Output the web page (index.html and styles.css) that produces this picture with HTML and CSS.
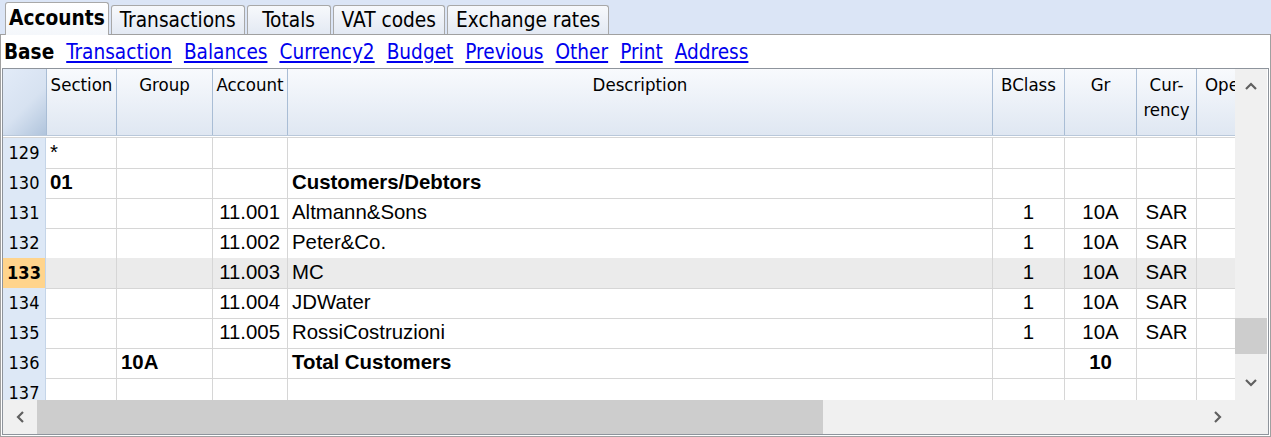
FILE: index.html
```html
<!DOCTYPE html>
<html>
<head>
<meta charset="utf-8">
<link rel="stylesheet" href="styles.css">
</head>
<body>
<div class="tabbar">
  <div class="tab active">Accounts</div>
  <div class="tab">Transactions</div>
  <div class="tab totals">Totals</div>
  <div class="tab">VAT codes</div>
  <div class="tab">Exchange rates</div>
</div>
<div class="panel">
  <div class="views">
    <span class="view-current">Base</span>
    <a class="view-link">Transaction</a>
    <a class="view-link">Balances</a>
    <a class="view-link">Currency2</a>
    <a class="view-link">Budget</a>
    <a class="view-link">Previous</a>
    <a class="view-link">Other</a>
    <a class="view-link">Print</a>
    <a class="view-link">Address</a>
  </div>
  <div class="frame">
    <div class="frame-main">
      <div class="viewport">
        <div class="row head">
          <div class="corner-cell"></div>
          <div class="hcell">Section</div>
          <div class="hcell">Group</div>
          <div class="hcell">Account</div>
          <div class="hcell">Description</div>
          <div class="hcell">BClass</div>
          <div class="hcell">Gr</div>
          <div class="hcell">Cur-<br>rency</div>
          <div class="hcell hcell-last">Opening</div>
        </div>
        <div class="body">
          <div class="row">
            <div class="num">129</div><div class="cell l">*</div><div class="cell"></div><div class="cell"></div><div class="cell l"></div><div class="cell"></div><div class="cell"></div><div class="cell"></div><div class="cell"></div>
          </div>
          <div class="row">
            <div class="num">130</div><div class="cell l b">01</div><div class="cell"></div><div class="cell"></div><div class="cell l b">Customers/Debtors</div><div class="cell"></div><div class="cell"></div><div class="cell"></div><div class="cell"></div>
          </div>
          <div class="row">
            <div class="num">131</div><div class="cell"></div><div class="cell"></div><div class="cell r">11.001</div><div class="cell l">Altmann&amp;Sons</div><div class="cell c">1</div><div class="cell c">10A</div><div class="cell c">SAR</div><div class="cell"></div>
          </div>
          <div class="row">
            <div class="num">132</div><div class="cell"></div><div class="cell"></div><div class="cell r">11.002</div><div class="cell l">Peter&amp;Co.</div><div class="cell c">1</div><div class="cell c">10A</div><div class="cell c">SAR</div><div class="cell"></div>
          </div>
          <div class="row selected">
            <div class="num">133</div><div class="cell"></div><div class="cell"></div><div class="cell r">11.003</div><div class="cell l">MC</div><div class="cell c">1</div><div class="cell c">10A</div><div class="cell c">SAR</div><div class="cell"></div>
          </div>
          <div class="row">
            <div class="num">134</div><div class="cell"></div><div class="cell"></div><div class="cell r">11.004</div><div class="cell l">JDWater</div><div class="cell c">1</div><div class="cell c">10A</div><div class="cell c">SAR</div><div class="cell"></div>
          </div>
          <div class="row">
            <div class="num">135</div><div class="cell"></div><div class="cell"></div><div class="cell r">11.005</div><div class="cell l">RossiCostruzioni</div><div class="cell c">1</div><div class="cell c">10A</div><div class="cell c">SAR</div><div class="cell"></div>
          </div>
          <div class="row">
            <div class="num">136</div><div class="cell"></div><div class="cell l b">10A</div><div class="cell"></div><div class="cell l b">Total Customers</div><div class="cell"></div><div class="cell c b">10</div><div class="cell"></div><div class="cell"></div>
          </div>
          <div class="row">
            <div class="num">137</div><div class="cell"></div><div class="cell"></div><div class="cell"></div><div class="cell"></div><div class="cell"></div><div class="cell"></div><div class="cell"></div><div class="cell"></div>
          </div>
        </div>
      </div>
      <div class="vscroll">
        <div class="arrow"><svg width="12" height="8" viewBox="0 0 12 8"><polyline points="1,7 6,2 11,7" fill="none" stroke="#606060" stroke-width="2.2"/></svg></div>
        <div class="vtrack"><div class="vthumb"></div></div>
        <div class="arrow"><svg width="12" height="8" viewBox="0 0 12 8"><polyline points="1,1 6,6 11,1" fill="none" stroke="#606060" stroke-width="2.2"/></svg></div>
      </div>
    </div>
    <div class="frame-bottom">
      <div class="hscroll">
        <div class="harrow"><svg width="8" height="12" viewBox="0 0 8 12"><polyline points="7,1 2,6 7,11" fill="none" stroke="#606060" stroke-width="2.2"/></svg></div>
        <div class="htrack"><div class="hthumb"></div></div>
        <div class="harrow"><svg width="8" height="12" viewBox="0 0 8 12"><polyline points="1,1 6,6 1,11" fill="none" stroke="#606060" stroke-width="2.2"/></svg></div>
      </div>
      <div class="scorner"></div>
    </div>
  </div>
</div>
</body>
</html>
```

FILE: styles.css
```css
* { box-sizing: border-box; }
html, body { margin: 0; padding: 0; }
body {
  width: 1271px;
  height: 437px;
  overflow: hidden;
  background: #dbe5f6;
  font-family: "DejaVu Sans Condensed", "DejaVu Sans", sans-serif;
  font-stretch: condensed;
  color: #000;
}

.tabbar {
  height: 34px;
  display: flex;
  align-items: flex-end;
  gap: 2px;
  padding-left: 5px;
  position: relative;
  z-index: 2;
}
.tab {
  height: 29px;
  padding: 0 8px;
  border: 1px solid #a8a8a8;
  border-bottom: none;
  border-radius: 3px 3px 0 0;
  background: linear-gradient(#f7f9fc, #e3e9f3);
  font-size: 20.7px;
  line-height: 28px;
  text-align: center;
  white-space: nowrap;
}
.tab.totals { min-width: 84px; }
.tab.active {
  height: 33px;
  margin-bottom: -1px;
  padding: 0 3px;
  background: linear-gradient(#ffffff, #f4f7fb);
  font-weight: bold;
  line-height: 31px;
}

.panel {
  height: 403px;
  background: #fff;
  border: 1px solid #a0a0a0;
  padding: 0 1px 1px 1px;
  display: flex;
  flex-direction: column;
}
.views {
  height: 33px;
  display: flex;
  align-items: center;
  gap: 12px;
  padding-left: 2px;
  font-size: 20.6px;
  white-space: nowrap;
}
.view-current { font-weight: bold; }
.view-link { color: #0000ee; text-decoration: underline; cursor: pointer; }

.frame {
  flex: 1;
  border: 1px solid #8e949c;
  display: flex;
  flex-direction: column;
  min-height: 0;
}
.frame-main {
  height: 331px;
  display: flex;
}
.viewport {
  width: 1232px;
  overflow: hidden;
  display: flex;
  flex-direction: column;
}
.row {
  display: grid;
  grid-template-columns: 43px 71px 96px 75px 705px 72px 72px 60px 100px;
  height: 30px;
  flex: none;
}
.row.head {
  height: 67px;
  border-bottom: 1px solid #b9c8da;
  margin-bottom: 1px;
}
.corner-cell {
  background: linear-gradient(135deg, #e2ebf8 0%, #d7e2f1 55%, #b0c4dc 100%);
}
.hcell {
  background: linear-gradient(#f8fafd, #dfe7f2);
  border-right: 1px solid #a9bdd5;
  text-align: center;
  font-size: 18.5px;
  line-height: 25px;
  padding-top: 3px;
  white-space: nowrap;
  overflow: hidden;
}
.corner-cell + .hcell { border-left: 1px solid #a9bdd5; }
.hcell-last { text-align: left; padding-left: 8px; border-right: none; }

.body { border-top: 1px solid #d6d6d6; }
.num {
  background: #dde8f6;
  border-bottom: 1px solid #a9c0dc;
  border-right: 1px solid #c5d5e8;
  text-align: center;
  font-size: 18px;
  line-height: 30px;
}
.cell {
  border-right: 1px solid #d6d6d6;
  border-bottom: 1px solid #d6d6d6;
  font-family: "Liberation Sans", Arial, sans-serif;
  font-stretch: normal;
  font-size: 20.4px;
  line-height: 29px;
  white-space: nowrap;
  overflow: hidden;
}
.cell.l { padding-left: 4px; }
.cell.r { text-align: right; padding-right: 7px; }
.cell.c { text-align: center; }
.cell.b { font-weight: bold; }
.row.selected .cell { background: #ebebeb; }
.row.selected .num {
  background: #ffd48c;
  border-bottom: 1px solid #f3a33a;
  font-weight: bold;
}

.vscroll {
  width: 32px;
  background: #f0f0f0;
  display: flex;
  flex-direction: column;
}
.arrow {
  height: 34px;
  display: flex;
  align-items: center;
  justify-content: center;
  flex: none;
}
.vtrack { flex: 1; padding-top: 215px; }
.vthumb { height: 36px; background: #cdcdcd; }

.frame-bottom {
  flex: 1;
  display: flex;
}
.hscroll {
  width: 1232px;
  background: #f0f0f0;
  display: flex;
}
.harrow {
  width: 34px;
  display: flex;
  align-items: center;
  justify-content: center;
  flex: none;
}
.htrack { flex: 1; }
.hthumb { width: 786px; height: 100%; background: #cdcdcd; }
.scorner { flex: 1; background: #f0f0f0; }
```
